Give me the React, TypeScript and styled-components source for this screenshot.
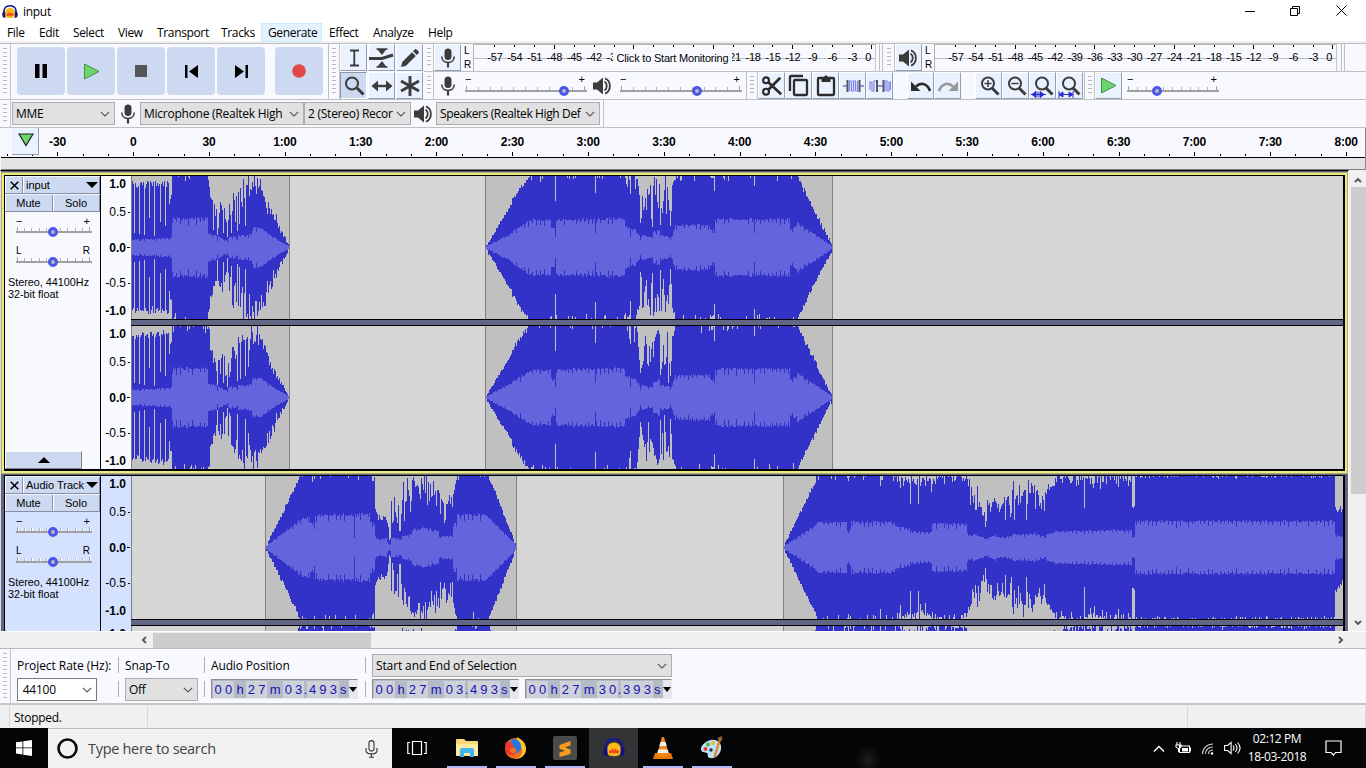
import React from "react";
import styled, { createGlobalStyle } from "styled-components";

const Global = createGlobalStyle`
  * { box-sizing: border-box; }
  html, body { margin: 0; background: #f8f9ff; overflow: hidden; }
  svg { display: block; flex: none; }
`;

const ui = `font-family: "Open Sans", sans-serif; font-size: 12px; letter-spacing: -0.3px; color: #000;`;
const arial = `font-family: "Liberation Sans", Arial, sans-serif; color: #000;`;

const Screen = styled.div`
  width: 1366px; height: 768px; display: flex; flex-direction: column;
  background: #f8f9ff; overflow: hidden; white-space: nowrap; ${ui}
`;

/* ---------- title + menu ---------- */
const TitleBar = styled.header`
  height: 23px; display: flex; align-items: center; background: #fff; padding-left: 2px; flex: none;
`;
const TitleText = styled.span`margin: 0 auto 0 5px;`;
const WinButtons = styled.div`display: flex; width: 138px; justify-content: space-around; align-items: center; margin-right: 1px; padding-bottom: 2px;`;
const MenuBar = styled.nav`
  height: 20px; display: flex; background: linear-gradient(#fff 0 18px, #f0f0f0 18px); flex: none;
`;
const MenuItem = styled.span<{ $w: number; $hot?: boolean }>`
  width: ${(p) => p.$w}px; height: 19px; line-height: 19px; padding-left: 7px; flex: none;
  letter-spacing: -0.35px;
  background: ${(p) => (p.$hot ? "#e5f3ff" : "transparent")};
  box-shadow: ${(p) => (p.$hot ? "inset 0 0 0 1px #cce8ff" : "none")};
`;

/* ---------- toolbars ---------- */
const ToolDock = styled.div`height: 57px; display: flex; flex: none; border-top: 1px solid #bdbdbd; border-bottom: 1px solid #c0c0c0;`;
const Grip = styled.div<{ $w?: number }>`
  width: ${(p) => p.$w ?? 11}px; flex: none; align-self: stretch; border-right: 1px solid #c4c4c4;
  display: flex; justify-content: center; padding: 4px 0;
  &::before { content: ""; width: 4px; background: repeating-linear-gradient(#b9b9bd 0 1px, transparent 1px 4px); }
`;
const Transport = styled.div`width: 318px; display: flex; gap: 2px; padding: 3px 0 0 6px; border-right: 1px solid #c0c0c0;`;
const BigButton = styled.div<{ $gap?: number }>`
  width: 48px; height: 48px; border-radius: 4px; background: #ccd9f0; margin-left: ${(p) => p.$gap ?? 0}px;
  display: flex; align-items: center; justify-content: center;
`;
const ToolGrid = styled.div`width: 84px; display: grid; grid-template-columns: repeat(3, 28px); grid-template-rows: 28px 27px; flex: none;`;
const ToolButton = styled.div<{ $down?: boolean; $w?: number }>`
  width: ${(p) => p.$w ?? 27}px; height: 27px; flex: none; display: flex; align-items: center; justify-content: center;
  background: ${(p) => (p.$down ? "#ccd9f0" : "#eaf1ff")};
  border-style: solid; border-width: 1px;
  border-color: ${(p) => (p.$down ? "#8c97ad #fff #fff #8c97ad" : "#fff #959db3 #959db3 #fff")};
`;
const Stack = styled.div`flex: 1; display: flex; flex-direction: column; min-width: 0;`;
const ToolRow = styled.div<{ $last?: boolean }>`
  height: ${(p) => (p.$last ? 27 : 28)}px; display: flex; border-bottom: ${(p) => (p.$last ? 0 : 1)}px solid #c0c0c0; flex: none;
`;
const Gap = styled.div<{ $w: number; $line?: boolean }>`
  width: ${(p) => p.$w}px; flex: none; border-right: ${(p) => (p.$line ? "1px solid #c0c0c0" : "none")};
`;
const Centered = styled.div<{ $w: number }>`width: ${(p) => p.$w}px; flex: none; display: flex; align-items: center; justify-content: center;`;

const Channels = styled.div`
  width: 12px; display: flex; flex-direction: column; padding: 0 0 0 3px;
  ${arial} font-size: 10px; line-height: 14px; letter-spacing: 0;
`;
const Meter = styled.div<{ $pad: number; $w: number }>`
  position: relative; width: ${(p) => p.$w}px; display: flex; padding-left: ${(p) => p.$pad}px; flex: none;
  border-left: 1px solid #b5b5b5; border-top: 1px solid #b5b5b5; border-right: 1px solid #c8c8c8;
  background: linear-gradient(transparent 13px, #bcbcc0 13px 14px, transparent 14px);
`;
const MeterMark = styled.div<{ $major?: boolean; $last?: boolean }>`
  width: ${(p) => (p.$last ? 12 : 19.86)}px; flex: none; display: flex; flex-direction: column; align-items: center;
  ${arial} font-size: 11px; line-height: 12px; letter-spacing: -0.2px;
  &::before {
    content: ""; width: 1px; height: ${(p) => (p.$major ? 4 : 2)}px; background: #000;
    margin-bottom: ${(p) => (p.$major ? 2 : 4)}px; margin-left: ${(p) => (p.$last ? 7 : 0)}px;
  }
`;
const MeterHint = styled.div`
  position: absolute; left: 139px; top: 4px; width: 119px; height: 20px; line-height: 18px; text-align: center;
  background: #f8f9ff; ${arial} font-size: 11px; letter-spacing: -0.2px;
`;

const DeviceRow = styled.div`height: 28px; display: flex; flex: none; border-bottom: 1px solid #c0c0c0; align-items: center;`;
const Select = styled.div<{ $w: number; $h?: number; $white?: boolean; $ls?: number }>`
  width: ${(p) => p.$w}px; height: ${(p) => p.$h ?? 23}px; flex: none; display: flex; align-items: center;
  justify-content: space-between; padding: 0 4px 0 3px; overflow: hidden;
  background: ${(p) => (p.$white ? "#fff" : "#e1e1e1")}; border: 1px solid ${(p) => (p.$white ? "#7a7a7a" : "#adadad")};
  letter-spacing: ${(p) => p.$ls ?? -0.25}px;
`;
const ClipText = styled.span`overflow: hidden; flex: 1;`;

/* ---------- sliders ---------- */
const SliderBox = styled.div<{ $w: number; $tight?: boolean }>`
  width: ${(p) => p.$w}px; flex: none; display: flex; flex-direction: column; ${arial} font-size: 9px; line-height: 8px; letter-spacing: 0;
  & > svg { margin-top: ${(p) => (p.$tight ? -1 : 0)}px; }
`;
const SliderEnds = styled.div<{ $big?: boolean }>`
  display: flex; justify-content: space-between; padding: 0 2px 0 0; height: 9px;
  font-size: ${(p) => (p.$big ? 10 : 11)}px;
`;

function Slider({ w, at, ends = ["−", "+"], light }: { w: number; at: number; ends?: string[]; light?: boolean }) {
  const ticks = Array.from({ length: 11 }, (_, i) => Math.round(1 + (i * (w - 4)) / 10));
  return (
    <SliderBox $w={w} $tight={light}>
      <SliderEnds $big={ends[0] === "L"}><span>{ends[0]}</span><span>{ends[1]}</span></SliderEnds>
      <svg width={w} height={13} shapeRendering="crispEdges">
        {ticks.map((x, i) => {
          const edge = i === 0 || i === 10;
          return (
            <React.Fragment key={i}>
              <rect x={x} y={edge ? 2 : 3} width={1} height={edge ? 4 : 3} fill={edge ? "#a0a0a0" : "#b4b4b8"} />
              {light && <rect x={x + 1} y={edge ? 2 : 3} width={1} height={edge ? 4 : 3} fill="#fff" />}
            </React.Fragment>
          );
        })}
        <rect x={0} y={6} width={w} height={2} fill="#a0a0a0" />
        <circle cx={at} cy={7} r={3.5} fill="#b8b8b8" stroke="#4a55ea" strokeWidth={3} shapeRendering="auto" />
      </svg>
    </SliderBox>
  );
}

/* ---------- icons ---------- */
const ink = "#3c3c3c";
const Mic = () => (
  <svg width="16" height="20" viewBox="0 0 16 20">
    <rect x="4.500" y="0.5" width="7" height="11.500" rx="3.500" fill={ink} />
    <path d="M1.8 8.5c0 3.800 2.700 6 6.200 6s6.200-2.200 6.200-6" fill="none" stroke={ink} strokeWidth="1.600" />
    <path d="M8 14v5.500" stroke={ink} strokeWidth="2.200" />
  </svg>
);
const Speaker = () => (
  <svg width="19" height="18" viewBox="0 0 19 18">
    <path d="M0 5.500h4l6-5v17l-6-5H0z" fill={ink} />
    <path d="M11.500 4.500c3 2 3 7 0 9M12 1.300c6.500 2.700 6.500 12.700 0 15.400" fill="none" stroke={ink} strokeWidth="1.800" />
  </svg>
);
const Chevron = () => (
  <svg width="10" height="6" viewBox="0 0 10 6"><path d="M.8.8L5 5 9.200.8" fill="none" stroke="#555" strokeWidth="1.100" /></svg>
);
const PlayIcon = () => (
  <svg width="17" height="17" viewBox="0 0 17 17"><path d="M1.500 1l14.500 7.500L1.500 16z" fill="#6cd66c" stroke="#4a8a4a" strokeWidth="1" /></svg>
);
const Lens = ({ kind }: { kind: string }) => (
  <svg width="24" height="24" viewBox="0 0 24 24">
    <circle cx={kind === "tool" ? 10 : 11} cy="9.500" r="6" fill="none" stroke={ink} strokeWidth="2" />
    <path d="M15 14l6.500 6.500" stroke={ink} strokeWidth="3" />
    {(kind === "in" || kind === "out") && <path d="M7.500 9.500h7" stroke={ink} strokeWidth="1.500" />}
    {kind === "in" && <path d="M11 6v7" stroke={ink} strokeWidth="1.500" />}
    {kind === "sel" && <path d="M0 20.500h15M5 17.500v6l-4-3zM9 17.500v6l4-3zM7 17.500v6" fill="#2a2ad0" stroke="#2a2ad0" strokeWidth="1" />}
    {kind === "fit" && <path d="M1 20.500h14M1 17v7M15 17v7M5 18v5l-4-2.500zM11 18v5l4-2.500z" fill="#2a2ad0" stroke="#2a2ad0" strokeWidth="1" />}
  </svg>
);
const Undo = ({ c, flip }: { c: string; flip?: boolean }) => (
  <svg width="22" height="20" viewBox="0 0 22 20">
    <g transform={flip ? "translate(22 0) scale(-1 1)" : undefined}>
      <path d="M6 10.500C10 6.500 17 6.500 20 15" fill="none" stroke={c} strokeWidth="2.600" />
      <path d="M1 5.500v9.500h9.500z" fill={c} />
    </g>
  </svg>
);
const Icon = ({ name }: { name: string }) => {
  switch (name) {
    case "ibeam":
      return <svg width="20" height="22"><path d="M6 3.500h3.500L10 4.500l.5-1H15M6 18.500h3.500l.5-1 .5 1H15M10.300 4v14" fill="none" stroke={ink} strokeWidth="1.800" /></svg>;
    case "envelope":
      return <svg width="25" height="24"><path d="M0 12.500h13l11-3.500" fill="none" stroke={ink} strokeWidth="3" /><path d="M7.500 3h11M7.500 21h11" stroke={ink} strokeWidth="1.500" /><path d="M8 3h9.500l-4.500 6zM8 21h9.500l-4.500-6z" fill={ink} /></svg>;
    case "pencil":
      return <svg width="20" height="20"><path d="M1 19l1.300-5L12 4.200 15.800 8 6 17.700zM13 3.200L15 1.200c1-.8 4.600 2.800 3.800 3.800l-2 2z" fill={ink} /></svg>;
    case "shift":
      return <svg width="22" height="16"><path d="M4 8h14" stroke={ink} strokeWidth="2.400" /><path d="M0.500 8l6.500-5.500v11zM21.500 8L15 2.500v11z" fill={ink} /></svg>;
    case "multi":
      return <svg width="22" height="22"><path d="M11 1v20M2 6l18 10M20 6L2 16" stroke={ink} strokeWidth="2.900" /></svg>;
    case "cut":
      return <svg width="22" height="22" viewBox="0 0 24 24"><path d="M8 8L22 21M8 16L21 3" stroke="#2c2c2c" strokeWidth="3" /><circle cx="5.500" cy="5.800" r="3.200" fill="none" stroke="#2c2c2c" strokeWidth="2.400" /><circle cx="5.500" cy="18.200" r="3.200" fill="none" stroke="#2c2c2c" strokeWidth="2.400" /></svg>;
    case "copy":
      return <svg width="21" height="23" viewBox="0 0 21 23"><rect x="6" y="6" width="13" height="15" rx="1" fill="none" stroke="#2c2c2c" strokeWidth="2.300" /><path d="M2 17V3q0-1 1-1h12" fill="none" stroke="#2c2c2c" strokeWidth="2.300" /></svg>;
    case "paste":
      return <svg width="20" height="23" viewBox="0 0 20 23"><rect x="2" y="4" width="16" height="17" rx="1" fill="none" stroke="#2c2c2c" strokeWidth="2.300" /><path d="M5.500 3h2.500q2-3.500 4 0h2.500v5h-9z" fill="#2c2c2c" /></svg>;
    case "trim":
      return <svg width="22" height="18"><path d="M1 9h5M17 9h5" stroke="#8c93ea" strokeWidth="2" /><path d="M5.500 3v12M17.500 3v12" stroke="#555" strokeWidth="2" /><path d="M7.500 14V4h2v10h2V4h2v10h2V4" fill="none" stroke="#7d86e8" strokeWidth="1.200" /></svg>;
    case "silence":
      return <svg width="22" height="18"><path d="M8 9h7" stroke="#8c93ea" strokeWidth="2" /><path d="M8 3v12M14.500 3v12" stroke="#555" strokeWidth="2" /><path d="M1 13V5h2v9h2V4h2M16 14V4h2v10h2V5h1.500v8" fill="none" stroke="#7d86e8" strokeWidth="1.200" /></svg>;
    default:
      return null;
  }
};
const Headphones = ({ s }: { s: number }) => (
  <svg width={s} height={s} viewBox="0 0 24 24">
    <path d="M12 6c5.500 0 7.500 4 7.500 8.500s-1.500 6.500-7.500 6.500-7.500-2-7.500-6.500S6.500 6 12 6z" fill="#f9b91c" />
    <path d="M6.500 15.500l1.500-1.500 1 1 1.400-3 1.600 3 1.600-3 1.400 3 1-1 1.500 1.500v1.500l-2 1-1.500-1-2 1.500-2-1.500-1.500 1-2-1z" fill="#ee4a1c" />
    <path d="M3 14C2 6 6 2.500 12 2.500S22 6 21 14" fill="none" stroke="#13139c" strokeWidth="2.200" />
    <path d="M4.500 11C1 11 0 14 .5 17s1.500 4 4.500 4zM19.500 11c3.500 0 4.500 3 4 6s-1.500 4-4.500 4z" fill="#10108e" />
  </svg>
);

/* ---------- timeline ---------- */
const Timeline = styled.div`position: relative; height: 42px; flex: none; display: flex; flex-direction: column; border-right: 1px solid #888;`;
const TimeLabels = styled.div`height: 20px; display: flex; padding: 6px 0 0 19.600px; overflow: hidden;`;
const TimeLabel = styled.span`width: 75.8px; flex: none; text-align: center; ${arial} font-size: 12px; font-weight: bold; letter-spacing: -0.2px; line-height: 17px;`;
const Shelf = styled.div`height: 13px; margin-left: 1px; background: #e3e3e3; border-bottom: 1px solid #808080; border-top: 1px solid #000; flex: none;`;
const PinButton = styled.div`
  position: absolute; left: 12px; top: 0; width: 27px; height: 27px; background: #eaf1ff;
  border-right: 1px solid #959db3; border-bottom: 1px solid #959db3; display: flex; align-items: center; justify-content: center; padding: 0 0 3px 2px;
`;

/* ---------- tracks ---------- */
const Workspace = styled.div`height: 461px; display: flex; flex: none; background: #f0f0f0;`;
const TrackList = styled.div`
  width: 1349px; height: 461px; overflow: hidden; flex: none; display: flex; flex-direction: column;
  background: #626685; border-left: 1px solid #e0e0e0; border-top: 1px solid #000; border-right: 1px solid #fff;
`;
const TrackFrame = styled.section<{ $focus?: boolean }>`
  height: ${(p) => (p.$focus ? 300 : 296)}px; flex: none; margin: ${(p) => (p.$focus ? "2px 1px 0 1px" : "2px 3px 0 3px")};
  border: ${(p) => (p.$focus ? "2px solid #ecec7c" : "0")};
  box-shadow: ${(p) => (p.$focus ? "0 0 0 1px #aaa97c" : "none")};
`;
const TrackInner = styled.div`height: 296px; display: flex; border: 1px solid #000; border-right-width: 2px; border-bottom-width: 2px;`;
const Panel = styled.div<{ $sel?: boolean }>`
  width: 96px; flex: none; display: flex; flex-direction: column; border-right: 1px solid #000;
  background: ${(p) => (p.$sel ? "#d4e2ff" : "#f8f9ff")}; ${arial} font-size: 11px; letter-spacing: 0;
`;
const PanelRow = styled.div`height: 18px; display: flex; flex: none; border-bottom: 1px solid #8a8fa3;`;
const PanelCell = styled.div<{ $w: number; $center?: boolean; $pad?: number }>`
  width: ${(p) => p.$w}px; display: flex; align-items: center; justify-content: ${(p) => (p.$center ? "center" : "space-between")};
  background: #ccd9f0; border-left: 1px solid #fff; border-top: 1px solid #f0f4ff; box-shadow: inset -1px 0 #8a8fa3;
  padding: ${(p) => (p.$center ? `0 ${p.$pad ?? 2}px 0 0` : "0 2px")}; flex: none;
`;
const PanelSliders = styled.div`padding: 5px 0 0 11px; display: flex; flex-direction: column; gap: 9px; height: 63px;`;
const PanelInfo = styled.div`padding: 1px 0 0 3px; line-height: 12px; flex: 1; font-size: 10.800px;`;
const Collapse = styled.div`
  width: 77px; height: 18px; background: #ccd9f0; border: 1px solid #fff; border-right-color: #808080; border-bottom-color: #808080;
  display: flex; align-items: center; justify-content: center;
`;
const Lanes = styled.div`flex: 1; display: flex; flex-direction: column; overflow: hidden;`;
const Lane = styled.div`height: 143px; display: flex; flex: none;`;
const LaneDivider = styled.div<{ $sel?: boolean }>`
  height: 7px; flex: none; border: solid #000; border-width: 1px 0;
  background: #626685; margin-left: 30px; box-shadow: -30px 0 ${(p) => (p.$sel ? "#d4e2ff" : "#f8f9ff")};
`;
const Scale = styled.div<{ $sel?: boolean }>`
  width: 31px; flex: none; border-right: 1px solid #808080;
  background: ${(p) => (p.$sel ? "#d4e2ff" : "#f8f9ff")};
  display: grid; grid-template-rows: 16px 40px 31px 40px 16px; ${arial} font-size: 12px; letter-spacing: 0;
`;
const ScaleMark = styled.span<{ $bold?: boolean; $tick?: boolean }>`
  display: flex; align-items: center; justify-content: flex-end; gap: 1px; line-height: 14px;
  font-weight: ${(p) => (p.$bold ? "bold" : "normal")}; padding-right: ${(p) => (p.$tick ? 1 : 5)}px;
  &::after { content: ""; display: ${(p) => (p.$tick ? "block" : "none")}; width: ${(p) => (p.$bold ? 3 : 2)}px; height: 1px; background: #000; margin-left: ${(p) => (p.$bold ? 0 : 1)}px; }
`;

/* start x, end x, peak from/to, rms from/to, jitter, dip chance, dip depth */
type Seg = [number, number, number, number, number, number, number, number, number];
type Clip = { from: number; to: number; segs: Seg[]; dips?: [number, number, number][] };

const clipsA: Clip[] = [
  {
    from: 132, to: 289,
    segs: [
      [132, 170, 0.86, 0.9, 0.1, 0.13, 0.07, 0, 0],
      [170, 172, 0.7, 0.8, 0.13, 0.13, 0.05, 0, 0],
      [172, 208, 1.02, 1.02, 0.4, 0.4, 0.05, 0, 0],
      [208, 210, 0.93, 0.85, 0.2, 0.18, 0.08, 0, 0],
      [210, 213, 0.7, 0.58, 0.18, 0.18, 0.06, 0, 0],
      [213, 225, 0.54, 0.5, 0.18, 0.1, 0.14, 0.3, 0.25],
      [225, 228, 0.35, 0.25, 0.1, 0.08, 0.14, 0, 0],
      [228, 237, 0.62, 0.72, 0.14, 0.14, 0.22, 0.4, 0.4],
      [237, 252, 0.85, 0.95, 0.16, 0.18, 0.28, 0.42, 0.5],
      [252, 262, 0.95, 0.85, 0.27, 0.26, 0.24, 0.15, 0.2],
      [262, 277, 0.82, 0.3, 0.25, 0.1, 0.16, 0.15, 0.12],
      [277, 289, 0.3, 0.01, 0.1, 0.01, 0.05, 0, 0],
    ],
    dips: [[134, 0.2, 0.1], [139, 0.18, 0.09], [144, 0.17, 0.08], [149, 0.4, 0.1], [154, 0.15, 0.1], [160, 0.35, 0.1], [165, 0.3, 0.11], [169, 0.6, 0.1], [217, 0.17, 0.08], [223, 0.2, 0.1], [227, 0.14, 0.07], [237, 0.23, 0.1], [245, 0.3, 0.14]],
  },
  {
    from: 486, to: 832,
    segs: [
      [486, 512, 0.02, 0.62, 0.01, 0.2, 0.03, 0, 0],
      [512, 530, 0.66, 1.02, 0.22, 0.37, 0.06, 0, 0],
      [530, 551, 1.04, 1.04, 0.38, 0.38, 0.05, 0, 0],
      [551, 556, 1.04, 1.04, 0.26, 0.25, 0.05, 0, 0],
      [556, 625, 1.04, 1.04, 0.38, 0.4, 0.05, 0, 0],
      [625, 637, 1.02, 0.98, 0.3, 0.24, 0.07, 0.15, 0.2],
      [637, 640, 0.8, 0.6, 0.2, 0.15, 0.2, 0.2, 0.3],
      [640, 653, 0.82, 0.74, 0.17, 0.13, 0.25, 0.45, 0.4],
      [653, 660, 0.9, 0.95, 0.2, 0.25, 0.2, 0.25, 0.4],
      [660, 672, 0.82, 0.75, 0.17, 0.13, 0.25, 0.45, 0.45],
      [672, 675, 0.85, 0.98, 0.2, 0.28, 0.05, 0, 0],
      [675, 710, 1.03, 1.03, 0.3, 0.31, 0.05, 0.05, 0.05],
      [710, 715, 0.98, 0.93, 0.25, 0.23, 0.06, 0, 0],
      [715, 790, 1.04, 1.04, 0.39, 0.39, 0.05, 0, 0],
      [790, 798, 1.03, 1, 0.23, 0.33, 0.05, 0.1, 0.05],
      [798, 832, 0.96, 0.01, 0.33, 0.01, 0.05, 0, 0],
    ],
    dips: [[555, 0.65, 0.14], [595, 0.76, 0.2], [630, 0.74, 0.14], [640, 0.33, 0.1], [641, 0.4, 0.14], [660, 0.31, 0.14], [670, 0.3, 0.1], [671, 0.5, 0.14], [714, 0.79, 0.19], [754, 0.86, 0.2]],
  },
];
const clipsB: Clip[] = [
  {
    from: 266, to: 516,
    segs: [
      [266, 298, 0.02, 0.93, 0.02, 0.36, 0.04, 0, 0],
      [298, 310, 0.98, 1.03, 0.38, 0.43, 0.06, 0, 0],
      [310, 315, 1.03, 1.03, 0.33, 0.33, 0.05, 0, 0],
      [315, 370, 1.04, 1.04, 0.45, 0.45, 0.06, 0, 0],
      [370, 375, 1, 0.95, 0.34, 0.3, 0.1, 0, 0],
      [375, 379, 0.5, 0.38, 0.15, 0.1, 0.05, 0, 0],
      [379, 387, 0.42, 0.4, 0.1, 0.13, 0.07, 0, 0],
      [387, 391, 0.3, 0.2, 0.07, 0.04, 0.1, 0, 0],
      [391, 402, 0.58, 0.62, 0.13, 0.12, 0.24, 0.35, 0.3],
      [402, 412, 0.75, 0.85, 0.15, 0.18, 0.26, 0.4, 0.35],
      [412, 420, 0.97, 0.72, 0.25, 0.24, 0.14, 0, 0],
      [420, 439, 0.87, 0.85, 0.28, 0.22, 0.2, 0.25, 0.25],
      [439, 453, 0.62, 0.65, 0.15, 0.16, 0.26, 0.15, 0.2],
      [453, 457, 0.8, 0.98, 0.3, 0.4, 0.08, 0, 0],
      [457, 488, 1.03, 1.03, 0.44, 0.45, 0.06, 0, 0],
      [488, 516, 1, 0.01, 0.42, 0.02, 0.04, 0, 0],
    ],
    dips: [[354, 1, 0.13], [389, 0.1, 0.03], [390, 0.12, 0.04], [314, 0.95, 0.25], [399, 0.22, 0.1], [400, 0.23, 0.1]],
  },
  {
    from: 784, to: 1343,
    segs: [
      [784, 816, 0.03, 0.94, 0.02, 0.31, 0.03, 0, 0],
      [816, 847, 1.03, 1.04, 0.34, 0.35, 0.05, 0, 0],
      [847, 851, 0.99, 0.99, 0.22, 0.24, 0.04, 0, 0],
      [851, 895, 1.04, 1.03, 0.35, 0.35, 0.05, 0, 0],
      [895, 911, 0.98, 0.9, 0.3, 0.24, 0.1, 0.2, 0.18],
      [911, 932, 0.93, 0.96, 0.23, 0.2, 0.12, 0.2, 0.2],
      [932, 967, 1, 0.98, 0.33, 0.32, 0.08, 0.12, 0.08],
      [967, 972, 0.95, 0.8, 0.2, 0.13, 0.12, 0.2, 0.3],
      [972, 986, 0.75, 0.52, 0.18, 0.12, 0.22, 0.25, 0.2],
      [986, 997, 0.55, 0.72, 0.12, 0.18, 0.14, 0.15, 0.15],
      [997, 1012, 0.62, 0.58, 0.13, 0.15, 0.2, 0.25, 0.2],
      [1012, 1034, 0.76, 0.78, 0.18, 0.18, 0.24, 0.25, 0.22],
      [1034, 1046, 0.74, 0.62, 0.2, 0.13, 0.16, 0.15, 0.2],
      [1046, 1056, 0.75, 0.95, 0.17, 0.22, 0.1, 0, 0],
      [1056, 1132, 0.98, 0.96, 0.22, 0.24, 0.1, 0.15, 0.14],
      [1132, 1135, 0.56, 0.6, 0.14, 0.13, 0.03, 0, 0],
      [1135, 1335, 1.0, 1.0, 0.36, 0.36, 0.05, 0.03, 0.04],
      [1335, 1343, 0.6, 0.5, 0.16, 0.15, 0.12, 0, 0],
    ],
    dips: [[910, 0.6, 0.2], [918, 0.6, 0.2], [985, 0.28, 0.11], [1084, 0.55, 0.18], [848, 0.93, 0.2], [880, 0.85, 0.3], [1005, 0.38, 0.12], [1044, 0.5, 0.12]],
  },
];

function random(seed: number) {
  let a = seed;
  return () => {
    a = (a * 1664525 + 1013904223) >>> 0;
    return a / 4294967296;
  };
}

function bars(clip: Clip, seed: number) {
  const rnd = random(seed);
  let peak = "", rms = "";
  const y = (v: number) => Math.round(Math.min(1, Math.max(0.008, v)) * 71.5);
  for (const [x0, x1, p0, p1, r0, r1, jit, chance, depth] of clip.segs) {
    for (let x = x0; x < x1; x++) {
      const t = (x - x0) / (x1 - x0);
      const p = p0 + (p1 - p0) * t;
      const r = r0 + (r1 - r0) * t;
      const dip = clip.dips?.find((d) => d[0] === x);
      const cut = rnd() < chance ? depth * (0.5 + rnd() * 0.5) : 0;
      const both = (rnd() - 0.5) * jit;
      const nick = () => (p > 1.01 && rnd() < 0.13 ? 0.05 + rnd() * 0.05 : 0);
      let up = p + both + (rnd() - 0.5) * jit - cut - nick();
      let down = p + both + (rnd() - 0.5) * jit - (rnd() < 0.7 ? cut : 0) - nick();
      let body = r * (1 + (rnd() - 0.5) * 0.1 - (x % 4 === 0 ? 0.22 * rnd() : 0));
      if (dip) {
        up = dip[1];
        down = dip[1];
        body = dip[2];
      }
      body = Math.min(body, up * 0.9, down * 0.9);
      const a = y(up), b = y(down), c = y(body);
      const lx = x - 132;
      peak += `M${lx} ${71 - a}h1v${a + b + 1}h-1z`;
      rms += `M${lx} ${71 - c}h1v${c * 2 + 1}h-1z`;
    }
  }
  return { peak, rms };
}

function Wave({ clips, seed }: { clips: Clip[]; seed: number }) {
  return (
    <svg width={1211} height={143} shapeRendering="crispEdges">
      <rect width={1211} height={143} fill="#d6d6d6" />
      {clips.map((c, i) => {
        const d = bars(c, seed + i * 977);
        return (
          <g key={i}>
            <rect x={c.from - 133} y={0} width={c.to - c.from + 2} height={143} fill="#808080" />
            <rect x={c.from - 132} y={0} width={c.to - c.from} height={143} fill="#c0c0c0" />
            <path d={d.peak} fill="#3232c8" />
            <path d={d.rms} fill="#6464dc" />
          </g>
        );
      })}
    </svg>
  );
}

function VScale({ sel }: { sel?: boolean }) {
  return (
    <Scale $sel={sel}>
      <ScaleMark $bold>1.0</ScaleMark>
      <ScaleMark $tick>0.5</ScaleMark>
      <ScaleMark $bold $tick>0.0</ScaleMark>
      <ScaleMark $tick>-0.5</ScaleMark>
      <ScaleMark $bold>-1.0</ScaleMark>
    </Scale>
  );
}

function Track({ name, clips, sel, seed }: { name: string; clips: Clip[]; sel?: boolean; seed: number }) {
  return (
    <TrackInner>
      <Panel $sel={sel}>
        <PanelRow>
          <PanelCell $w={18} $center $pad={0}>
            <svg width="9" height="9"><path d="M.7.7l7.600 7.600M8.300.7L.7 8.300" stroke="#000" strokeWidth="1.500" /></svg>
          </PanelCell>
          <PanelCell $w={77}>
            <span>{name}</span>
            <svg width="12" height="6"><path d="M0 0h12L6 6z" /></svg>
          </PanelCell>
        </PanelRow>
        <PanelRow>
          <PanelCell $w={48} $center>Mute</PanelCell>
          <PanelCell $w={47} $center>Solo</PanelCell>
        </PanelRow>
        <PanelSliders>
          <Slider w={76} at={37} light />
          <Slider w={76} at={37} ends={["L", "R"]} light />
        </PanelSliders>
        <PanelInfo>Stereo, 44100Hz<br />32-bit float</PanelInfo>
        <Collapse><svg width="12" height="6"><path d="M0 6h12L6 0z" /></svg></Collapse>
      </Panel>
      <Lanes>
        <Lane><VScale sel={sel} /><Wave clips={clips} seed={seed} /></Lane>
        <LaneDivider $sel={sel} />
        <Lane><VScale sel={sel} /><Wave clips={clips} seed={seed + 31} /></Lane>
      </Lanes>
    </TrackInner>
  );
}

const VScroll = styled.div`
  width: 17px; height: 461px; display: flex; flex-direction: column; align-items: center; background: #f0f0f0; padding: 6px 0 0 1px;
`;
const VThumb = styled.div`width: 15px; height: 307px; background: #cdcdcd; margin: 3px 0 125px;`;
const HScroll = styled.div`height: 17px; flex: none; display: flex; align-items: center; background: #f0f0f0; padding-left: 140px; border-top: 1px solid #fff;`;
const HThumb = styled.div`width: 218px; height: 15px; background: #cdcdcd; margin: 0 auto 0 5px;`;
const EndArrow = styled.div`margin-right: 21px;`;

const Arrow = ({ turn }: { turn: number }) => (
  <svg width="8" height="8" viewBox="0 0 8 8"><path d="M1 6l3-3 3 3" transform={`rotate(${turn} 4 4)`} fill="none" stroke="#555" strokeWidth="1.900" /></svg>
);

/* ---------- selection bar ---------- */
const SelectionBar = styled.div`height: 57px; display: flex; flex: none; border-top: 1px solid #b9b9b9; border-bottom: 2px solid #c6c6c6;`;
const Column = styled.div<{ $w: number; $pad: number; $line?: boolean }>`
  width: ${(p) => p.$w}px; padding: 5px 0 0 ${(p) => p.$pad}px; display: flex; flex-direction: column; gap: 1px;
  background: ${(p) => (p.$line ? "linear-gradient(transparent 8px, #b0b0b4 8px 24px, transparent 24px 32px, #b0b0b4 32px 48px, transparent 48px) no-repeat 0 0 / 1px 100%" : "none")};
`;
const Caption = styled.div<{ $ls?: number }>`height: 23px; line-height: 24px; letter-spacing: ${(p) => p.$ls ?? -0.15}px;`;
const Times = styled.div`display: flex; gap: 6px; padding-top: 1px;`;
const TimeBox = styled.div`
  width: 147px; height: 20px; display: flex; align-items: center; padding: 1px 0 1px 1px; flex: none; background: #b4bac6;
  border: 1px solid #8d8d8d; border-right-color: #e8e8e8; border-bottom-color: #e8e8e8; ${arial} font-size: 13px; color: #1a10b8; letter-spacing: 0;
`;
const glyphWidth: Record<string, number> = { h: 12.5, m: 16, s: 9.5, ".": 3.5 };
const Digit = styled.span<{ $c: string }>`
  width: ${(p) => glyphWidth[p.$c] ?? 10.4}px; display: flex; justify-content: center; flex: none; line-height: 17px;
  background: ${(p) => (p.$c in glyphWidth ? "transparent" : "#cdd1d8")};
`;
const DropArrow = styled.div`width: 8px; height: 18px; background: #e6e8ee; margin-left: auto; display: flex; align-items: center; justify-content: center;`;

function TimeField({ value }: { value: string }) {
  return (
    <TimeBox>
      {value.split("").map((c, i) => <Digit key={i} $c={c}>{c}</Digit>)}
      <DropArrow><svg width="8" height="5"><path d="M0 0h8L4 5z" /></svg></DropArrow>
    </TimeBox>
  );
}

const StatusBar = styled.div`height: 23px; display: flex; flex: none; background: #f0f0f0; padding: 1px 0;`;
const StatusCell = styled.div<{ $w: number }>`width: ${(p) => p.$w}px; flex: none; border-right: 1px solid #d7d7d7; padding-left: 4px; line-height: 23px; letter-spacing: -0.3px;`;

/* ---------- taskbar ---------- */
const Taskbar = styled.footer`height: 40px; flex: none; display: flex; background: radial-gradient(circle at 868px 32px, #1c1c1c 0, #040507 14px); color: #fff;`;
const StartButton = styled.div`width: 48px; display: flex; align-items: center; justify-content: center;`;
const SearchBox = styled.div`
  width: 344px; background: #f1f1f1; border-top: 1px solid #bbb; display: flex; align-items: center; padding: 0 14px 0 8px; gap: 9px;
  font-size: 14.500px; color: #444; letter-spacing: -0.300px;
`;
const SearchText = styled.span`flex: 1;`;
const TaskButton = styled.div<{ $active?: boolean; $open?: boolean }>`
  width: 49px; display: flex; align-items: center; justify-content: center; position: relative; flex: none;
  background: ${(p) => (p.$active ? "#333436" : "transparent")};
  &::after { content: ""; position: absolute; bottom: 0; left: 5px; width: 40px; height: 2px; background: ${(p) => (p.$open ? "#b2b6f4" : "transparent")}; }
`;
const Apps = styled.div`display: flex; padding-right: 1px;`;
const TaskView = styled.div`width: 49px; margin-right: 1px; display: flex; align-items: center; justify-content: center;`;
const Tray = styled.div`margin-left: auto; display: flex; align-items: center; gap: 10px; padding-right: 24px;`;
const Clock = styled.div`width: 62px; text-align: center; font-size: 12px; line-height: 18px; letter-spacing: -0.400px; color: #fff; margin: 0 7px 0 -5px;`;

function Marks({ hidden = [] }: { hidden?: number[] }) {
  return (
    <>
      {Array.from({ length: 20 }, (_, i) => {
        const v = -57 + i * 3;
        return <MeterMark key={v} $major={v % 12 === 0} $last={v === 0}>{hidden.includes(v) ? null : v}</MeterMark>;
      })}
    </>
  );
}

const timeNames = ["-30", "0", "30", "1:00", "1:30", "2:00", "2:30", "3:00", "3:30", "4:00", "4:30", "5:00", "5:30", "6:00", "6:30", "7:00", "7:30", "8:00"];

export default function App() {
  return (
    <Screen>
      <Global />
      <TitleBar>
        <Headphones s={16} />
        <TitleText>input</TitleText>
        <WinButtons>
          <svg width="10" height="10"><path d="M0 5.500h10" stroke="#000" /></svg>
          <svg width="10" height="10"><path d="M.5 2.500h7v7h-7zM2.500 2V.5h7v7H8" fill="none" stroke="#000" /></svg>
          <svg width="11" height="11"><path d="M.5.5l10 10M10.500.5l-10 10" stroke="#000" /></svg>
        </WinButtons>
      </TitleBar>
      <MenuBar>
        <MenuItem $w={32}>File</MenuItem>
        <MenuItem $w={34}>Edit</MenuItem>
        <MenuItem $w={45}>Select</MenuItem>
        <MenuItem $w={39}>View</MenuItem>
        <MenuItem $w={64}>Transport</MenuItem>
        <MenuItem $w={47}>Tracks</MenuItem>
        <MenuItem $w={61} $hot>Generate</MenuItem>
        <MenuItem $w={44}>Effect</MenuItem>
        <MenuItem $w={55}>Analyze</MenuItem>
        <MenuItem $w={40}>Help</MenuItem>
      </MenuBar>

      <ToolDock>
        <Grip />
        <Transport>
          <BigButton><svg width="12" height="14"><path d="M0 0h4.500v14H0zM7.500 0H12v14H7.500z" /></svg></BigButton>
          <BigButton><PlayIcon /></BigButton>
          <BigButton><svg width="12" height="12"><rect width="12" height="12" fill="#555" /></svg></BigButton>
          <BigButton><svg width="13" height="13"><path d="M0 0h2.500v13H0zM13 0v13L4 6.500z" /></svg></BigButton>
          <BigButton><svg width="13" height="13"><path d="M10.500 0H13v13h-2.500zM0 0l9 6.500L0 13z" /></svg></BigButton>
          <BigButton $gap={8}><svg width="14" height="14"><circle cx="7" cy="7" r="6.800" fill="#e34747" /></svg></BigButton>
        </Transport>
        <Grip />
        <ToolGrid>
          <ToolButton><Icon name="ibeam" /></ToolButton>
          <ToolButton><Icon name="envelope" /></ToolButton>
          <ToolButton><Icon name="pencil" /></ToolButton>
          <ToolButton $down><Lens kind="tool" /></ToolButton>
          <ToolButton><Icon name="shift" /></ToolButton>
          <ToolButton><Icon name="multi" /></ToolButton>
        </ToolGrid>
        <Stack>
          <ToolRow>
            <Grip $w={10} />
            <ToolButton><Mic /></ToolButton>
            <Channels><span>L</span><span>R</span></Channels>
            <Meter $pad={11} $w={403}><Marks hidden={[-36, -33, -30, -27, -24]} /><MeterHint>Click to Start Monitoring</MeterHint></Meter>
            <Gap $w={4} $line />
            <Gap $w={3} $line />
            <Grip $w={12} />
            <ToolButton><Speaker /></ToolButton>
            <Channels><span>L</span><span>R</span></Channels>
            <Meter $pad={11} $w={403}><Marks /></Meter>
            <Gap $w={5} $line />
            <Gap $w={3} $line />
          </ToolRow>
          <ToolRow $last>
            <Grip $w={10} />
            <Centered $w={27}><Mic /></Centered>
            <Gap $w={4} />
            <Centered $w={122}><Slider w={122} at={99} /></Centered>
            <Centered $w={31}><Speaker /></Centered>
            <Gap $w={2} />
            <Centered $w={122}><Slider w={122} at={77} /></Centered>
            <Gap $w={5} $line />
            <Grip $w={11} />
            <ToolButton><Icon name="cut" /></ToolButton>
            <ToolButton><Icon name="copy" /></ToolButton>
            <ToolButton><Icon name="paste" /></ToolButton>
            <ToolButton><Icon name="trim" /></ToolButton>
            <ToolButton><Icon name="silence" /></ToolButton>
            <Gap $w={14} />
            <ToolButton><Undo c="#2c2c2c" /></ToolButton>
            <ToolButton><Undo c="#999" flip /></ToolButton>
            <Gap $w={14} />
            <ToolButton><Lens kind="in" /></ToolButton>
            <ToolButton><Lens kind="out" /></ToolButton>
            <ToolButton><Lens kind="sel" /></ToolButton>
            <ToolButton><Lens kind="fit" /></ToolButton>
            <Gap $w={2} $line />
            <Grip $w={10} />
            <ToolButton><PlayIcon /></ToolButton>
            <Gap $w={5} />
            <Centered $w={92}><Slider w={92} at={30} /></Centered>
          </ToolRow>
        </Stack>
      </ToolDock>

      <DeviceRow>
        <Grip />
        <Gap $w={1} />
        <Select $w={103}>MME<Chevron /></Select>
        <Centered $w={25}><Mic /></Centered>
        <Select $w={164}><ClipText>Microphone (Realtek High</ClipText><Chevron /></Select>
        <Select $w={107}><ClipText>2 (Stereo) Recor</ClipText><Chevron /></Select>
        <Centered $w={25}><Speaker /></Centered>
        <Select $w={164} $ls={-0.38}><ClipText>Speakers (Realtek High Def</ClipText><Chevron /></Select>
        <Gap $w={3} />
        <Grip $w={1} />
      </DeviceRow>

      <Timeline>
        <TimeLabels>{timeNames.map((t) => <TimeLabel key={t}>{t}</TimeLabel>)}</TimeLabels>
        <svg width="1365" height="9" shapeRendering="crispEdges">
          {Array.from({ length: 54 }, (_, i) => {
            const major = i % 3 === 2;
            return <rect key={i} x={Math.round(6.700 + i * 25.270)} y={major ? 4 : 6} width="1" height={major ? 4 : 2} />;
          })}
        </svg>
        <Shelf />
        <PinButton>
          <svg width="16" height="14"><path d="M1 1h14L8 12.500z" fill="#6cd66c" stroke="#222" strokeWidth="1.200" /></svg>
        </PinButton>
      </Timeline>

      <Workspace>
        <TrackList>
          <TrackFrame $focus><Track name="input" clips={clipsA} seed={41} /></TrackFrame>
          <TrackFrame><Track name="Audio Track" clips={clipsB} sel seed={90} /></TrackFrame>
        </TrackList>
        <VScroll><Arrow turn={0} /><VThumb /><Arrow turn={180} /></VScroll>
      </Workspace>
      <HScroll><Arrow turn={-90} /><HThumb /><EndArrow><Arrow turn={90} /></EndArrow></HScroll>

      <SelectionBar>
        <Grip />
        <Column $w={107} $pad={6}>
          <Caption $ls={-0.050}>Project Rate (Hz):</Caption>
          <Select $w={80} $white><span>&thinsp;44100</span><Chevron /></Select>
        </Column>
        <Column $w={86} $pad={7} $line>
          <Caption>Snap-To</Caption>
          <Select $w={73}>Off<Chevron /></Select>
        </Column>
        <Column $w={161} $pad={7} $line>
          <Caption>Audio Position</Caption>
          <Times><TimeField value="00h27m03.493s" /></Times>
        </Column>
        <Column $w={320} $pad={7} $line>
          <Select $w={300} $ls={-0.120}>Start and End of Selection<Chevron /></Select>
          <Times><TimeField value="00h27m03.493s" /><TimeField value="00h27m30.393s" /></Times>
        </Column>
      </SelectionBar>
      <StatusBar>
        <StatusCell $w={10} />
        <StatusCell $w={138}>Stopped.</StatusCell>
        <StatusCell $w={1040} />
        <StatusCell $w={178} />
      </StatusBar>

      <Taskbar>
        <StartButton>
          <svg width="16" height="16"><path d="M0 2.300l6.500-.9v6.100H0zM7.300 1.300L16 0v7.500H7.300zM0 8.300h6.500v6.200L0 13.600zM7.300 8.300H16V16l-8.700-1.300z" fill="#fff" /></svg>
        </StartButton>
        <SearchBox>
          <svg width="23" height="23"><circle cx="11.500" cy="11.500" r="9" fill="none" stroke="#0a0a0a" strokeWidth="2.600" /></svg>
          <SearchText>Type here to search</SearchText>
          <svg width="13" height="18"><rect x="4" y=".6" width="5" height="10.500" rx="2.500" fill="none" stroke="#333" strokeWidth="1.100" /><path d="M1 8v2.500c0 4.500 11 4.500 11 0V8M6.500 14v3M4 17.300h5" fill="none" stroke="#333" strokeWidth="1.100" /></svg>
        </SearchBox>
        <TaskView>
          <svg width="20" height="16"><path d="M5.500 1.500h9v13h-9zM3 2.500H.8v11H3M17 2.500h2.200v11H17" fill="none" stroke="#fff" strokeWidth="1.200" /></svg>
        </TaskView>
        <Apps>
          <TaskButton $open>
            <svg width="22" height="20"><path d="M0 2q0-1 1-1h7l2 2h11q1 0 1 1v13q0 1-1 1H1q-1 0-1-1z" fill="#f8d775" /><path d="M0 6h22v11q0 1-1 1H1q-1 0-1-1z" fill="#fde9a0" /><path d="M4 19v-7q0-2 2-2h10q2 0 2 2v7h-4v-4H8v4z" fill="#3fb4ee" /></svg>
          </TaskButton>
          <TaskButton $open>
            <svg width="23" height="24" viewBox="0 0 23 24">
              <circle cx="11.500" cy="12.500" r="10.500" fill="#f5701d" />
              <path d="M13 1c3 2 9 5 9 12 0 6-5 10-11 10 5-1 8-5 7-10-.6-4-5-6-5-12z" fill="#ffc52b" />
              <path d="M7 4c5-3 11 2 10 8-.5 4-4 6-7 5 4-1 3-4 0-5-3-2-4-5-3-8z" fill="#2676dd" />
              <path d="M1.500 7c2-2 3-1 5-1 1 2 4 3 3 5s-4 1-4 3 3 4 6 3c-3 5-10 1-10-3z" fill="#f0382d" />
            </svg>
          </TaskButton>
          <TaskButton $open>
            <svg width="24" height="24"><rect width="24" height="24" rx="2" fill="#4a4a4a" /><path d="M6.500 9L17.500 5v4.500L12 11.500l5.500 2V18L6.500 21v-4.500L12 14.800l-5.500-2z" fill="#f89a1c" /></svg>
          </TaskButton>
          <TaskButton $active><Headphones s={22} /></TaskButton>
          <TaskButton $open>
            <svg width="22" height="24"><path d="M3 17h16l2 6H1z" fill="#e8780c" /><path d="M10 1h2l5 18q-6 3-12 0z" fill="#f58a1a" /><path d="M8.500 6h5l1.200 4H7.300zM6.300 13.500h9.400l1 3.500H5.300z" fill="#eee" /></svg>
          </TaskButton>
          <TaskButton $open>
            <svg width="24" height="24"><path d="M11 4c7-1 11 4 10 9-1 6-6 10-11 9-4-1-1-4-3-5s-6 0-6-4 5-8 10-9z" fill="#bfe2f5" /><circle cx="5.500" cy="13" r="2" fill="#e33b35" /><circle cx="8" cy="8.500" r="2" fill="#4cb748" /><circle cx="13" cy="7" r="2" fill="#f3b921" /><circle cx="11" cy="14" r="1.700" fill="#16324a" /><path d="M20 3l-5.500 18" stroke="#e08428" strokeWidth="2.400" /><path d="M17.500 2l4-2 1 3-3 4z" fill="#9a6234" /></svg>
          </TaskButton>
        </Apps>
        <Tray>
          <svg width="12" height="7"><path d="M1 6.500l5-5 5 5" fill="none" stroke="#fff" strokeWidth="1.400" /></svg>
          <svg width="16" height="12"><path d="M4.500 4h10v6.500H4.500zM15.500 5.500v4M2 0v3M5 0v3M1 3h5v2q-2.500 3-5 0zM3.500 6v4" fill="none" stroke="#fff" strokeWidth="1.100" /><path d="M7 6h6v3.500H7z" fill="#fff" /></svg>
          <svg width="13" height="13"><circle cx="11" cy="11.500" r="1.300" fill="#fff" /><path d="M7.500 12c0-2 1.500-4 4.500-4M4.500 12c0-4 3-7 7.500-7M1.500 12C1.500 6.500 6 2 12 2" fill="none" stroke="#ccc" strokeWidth="1.100" /></svg>
          <svg width="17" height="14"><path d="M.6 4.500h3l3.500-3v11l-3.500-3h-3zM9 4.500q2 2.500 0 5M11.300 3q3.500 4 0 8M13.600 1.500q5 5.500 0 11" fill="none" stroke="#fff" strokeWidth="1.100" /></svg>
          <Clock>02:12 PM<br />18-03-2018</Clock>
          <svg width="17" height="16"><path d="M1 1h15v11.500h-5.500L8.500 15l-2.500-2.500H1z" fill="none" stroke="#fff" strokeWidth="1.200" /></svg>
        </Tray>
      </Taskbar>
    </Screen>
  );
}
